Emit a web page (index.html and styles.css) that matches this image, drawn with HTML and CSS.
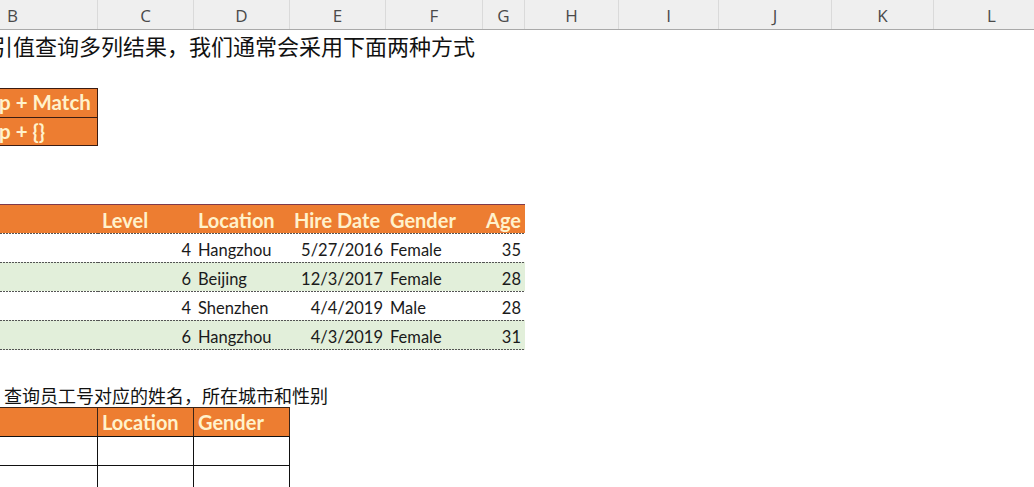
FILE: index.html
```html
<!DOCTYPE html>
<html>
<head>
<meta charset="utf-8">
<link rel="stylesheet" href="styles.css">
</head>
<body>
<div class="sheet">
  <div class="colhdr">
    <span>B</span><span>C</span><span>D</span><span>E</span><span>F</span><span>G</span><span>H</span><span>I</span><span>J</span><span>K</span><span>L</span>
  </div>
  <div class="row"><div class="cell note note-lg">引值查询多列结果，我们通常会采用下面两种方式</div></div>
  <div class="row"></div>
  <div class="row"><div class="cell box">p + Match</div></div>
  <div class="row"><div class="cell box box-last">p + {}</div></div>
  <div class="row"></div>
  <div class="row"></div>
  <div class="row thead">
    <div class="cell"></div>
    <div class="cell">Level</div>
    <div class="cell">Location</div>
    <div class="cell">Hire Date</div>
    <div class="cell">Gender</div>
    <div class="cell num">Age</div>
  </div>
  <div class="row trow">
    <div class="cell"></div>
    <div class="cell num">4</div>
    <div class="cell">Hangzhou</div>
    <div class="cell num">5/27/2016</div>
    <div class="cell">Female</div>
    <div class="cell num">35</div>
  </div>
  <div class="row trow alt">
    <div class="cell"></div>
    <div class="cell num">6</div>
    <div class="cell">Beijing</div>
    <div class="cell num">12/3/2017</div>
    <div class="cell">Female</div>
    <div class="cell num">28</div>
  </div>
  <div class="row trow">
    <div class="cell"></div>
    <div class="cell num">4</div>
    <div class="cell">Shenzhen</div>
    <div class="cell num">4/4/2019</div>
    <div class="cell">Male</div>
    <div class="cell num">28</div>
  </div>
  <div class="row trow alt trow-last">
    <div class="cell"></div>
    <div class="cell num">6</div>
    <div class="cell">Hangzhou</div>
    <div class="cell num">4/3/2019</div>
    <div class="cell">Female</div>
    <div class="cell num">31</div>
  </div>
  <div class="row row-short"></div>
  <div class="row"><div class="cell note note-sm">查询员工号对应的姓名，所在城市和性别</div></div>
  <div class="row bhead">
    <div class="cell"></div>
    <div class="cell">Location</div>
    <div class="cell">Gender</div>
  </div>
  <div class="row bbody">
    <div class="cell"></div>
    <div class="cell"></div>
    <div class="cell"></div>
  </div>
  <div class="row bbody">
    <div class="cell"></div>
    <div class="cell"></div>
    <div class="cell"></div>
  </div>
</div>
</body>
</html>
```

FILE: styles.css
```css
:root {
  --cols: 170px 96px 96px 96px 97px 42px 94px 100px 113px 102px 116px;
  --orange: #ed7d31;
  --cream: #fff2cc;
}

html, body {
  margin: 0;
  padding: 0;
  background: #fff;
}

body {
  width: 1034px;
  height: 487px;
  overflow: hidden;
}

.sheet {
  margin-left: -72px;
  width: 1122px;
  font-family: Lato, "Liberation Sans", sans-serif;
  color: #1a1a1a;
}

.colhdr {
  display: grid;
  grid-template-columns: var(--cols);
  height: 30px;
  box-sizing: border-box;
  background: #efefef;
  border-bottom: 1px solid #a9a9a9;
}

.colhdr span {
  display: flex;
  align-items: center;
  justify-content: center;
  border-right: 1px solid #dadada;
  font-family: "Open Sans", "Liberation Sans", sans-serif;
  font-size: 17px;
  color: #4a4a4a;
  padding-top: 2px;
  box-sizing: border-box;
}

.row {
  display: grid;
  grid-template-columns: var(--cols);
  height: 29px;
}

.row-short {
  height: 28px;
}

.cell {
  display: flex;
  align-items: flex-end;
  box-sizing: border-box;
  padding: 0 4px 3px;
  white-space: nowrap;
  overflow: hidden;
  line-height: 1.2;
}

.num {
  justify-content: flex-end;
  padding-right: 3px;
}

.note {
  grid-column: 1 / -1;
  overflow: visible;
  font-family: "Noto Sans CJK SC", sans-serif;
  color: #111;
}

.note-lg {
  font-size: 22px;
  padding-left: 63px;
  padding-bottom: 1px;
}

.note-sm {
  font-size: 18px;
  padding-left: 76px;
  padding-bottom: 0;
}

.box {
  background: var(--orange);
  color: var(--cream);
  font-weight: 700;
  font-size: 20.5px;
  border-top: 1px solid #3a1c12;
  border-right: 1px solid #3a1c12;
  padding-left: 71px;
  padding-bottom: 2px;
}

.box-last {
  border-bottom: 1px solid #3a1c12;
  padding-bottom: 1px;
}

.thead .cell {
  background: var(--orange);
  color: var(--cream);
  font-weight: 700;
  font-size: 20px;
  border-top: 1px solid #7e3a4c;
  padding-bottom: 1px;
}

.thead .num {
  padding-right: 4px;
}

.trow .cell {
  font-size: 16.5px;
  background-image: repeating-linear-gradient(90deg, #555 0 2px, transparent 2px 3px);
  background-size: 100% 1px;
  background-repeat: no-repeat;
  background-position: left top;
  padding-bottom: 1px;
}

.trow-last {
  height: 30px;
}

.trow-last .cell {
  background-image:
    repeating-linear-gradient(90deg, #555 0 2px, transparent 2px 3px),
    repeating-linear-gradient(90deg, #555 0 2px, transparent 2px 3px);
  background-size: 100% 1px, 100% 1px;
  background-position: left top, left bottom;
  padding-bottom: 2px;
}

.alt .cell {
  background-color: #e2efda;
}

.trow .cell:last-child {
  padding-right: 4px;
}

.bhead .cell {
  background: var(--orange);
  color: var(--cream);
  font-weight: 700;
  font-size: 20px;
  border-top: 1px solid #3a2418;
  border-right: 1px solid #3a2418;
  padding-bottom: 2px;
}

.bbody .cell {
  border-top: 1px solid #111;
  border-right: 1px solid #111;
}
```
